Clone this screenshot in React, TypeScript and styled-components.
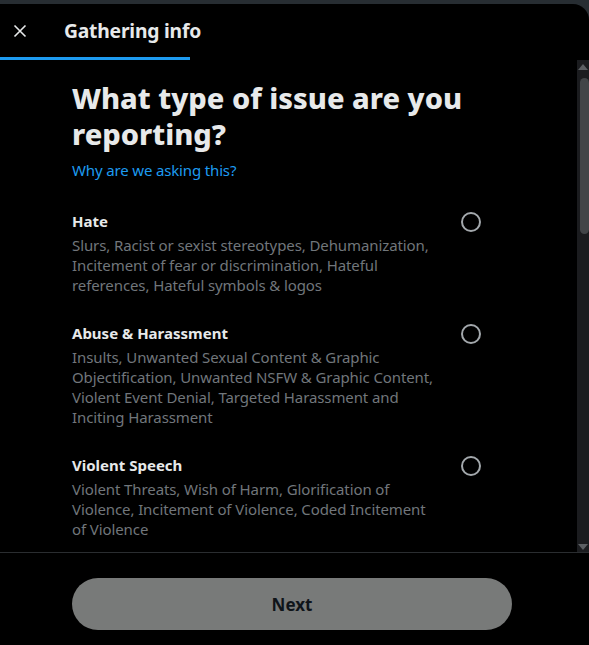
import React from "react";
import styled, { createGlobalStyle } from "styled-components";

const Global = createGlobalStyle`
  html, body { margin: 0; padding: 0; background: #272d32; }
  body { font-family: "Noto Sans", "Open Sans", sans-serif; }
  * { box-sizing: border-box; }
`;

const Page = styled.div`
  width: 589px;
  height: 645px;
  padding-top: 4px;
  background: #272d32;
  overflow: hidden;
`;

const Modal = styled.div`
  height: 641px;
  background: #000;
  border-top-right-radius: 16px;
  display: flex;
  flex-direction: column;
  overflow: hidden;
`;

const Header = styled.div`
  height: 53px;
  display: flex;
  align-items: center;
  padding-left: 10px;
  gap: 34px;
`;

const CloseButton = styled.button`
  width: 20px;
  height: 20px;
  padding: 0;
  border: none;
  background: transparent;
  display: flex;
  align-items: center;
  justify-content: center;
  color: #e7e9ea;
`;

const Title = styled.h2`
  margin: 0;
  font-size: 19.3px;
  font-weight: 700;
  color: #e7e9ea;
  letter-spacing: -0.2px;
`;

const Progress = styled.div`
  height: 3px;
  width: 100%;
`;

const ProgressFill = styled.div`
  height: 3px;
  background: #1d9bf0;
`;

const Body = styled.div`
  flex: 0 0 492px;
  display: flex;
  overflow: hidden;
`;

const Scroller = styled.div`
  flex: 1;
  overflow: hidden;
  padding: 20px 96px 0 72px;
`;

const Heading = styled.h1`
  margin: 0;
  font-size: 29px;
  line-height: 36px;
  font-weight: 800;
  color: #e7e9ea;
`;

const Link = styled.a`
  display: block;
  margin-top: 8px;
  font-size: 15px;
  line-height: 20px;
  color: #1d9bf0;
  text-decoration: none;
  letter-spacing: -0.15px;
`;

const List = styled.div`
  margin-top: 17px;
  display: flex;
  flex-direction: column;
`;

const Option = styled.label`
  display: flex;
  align-items: flex-start;
  justify-content: space-between;
  gap: 24px;
  padding: 14px 0;
`;

const OptionText = styled.div`
  flex: 1;
`;

const OptionTitle = styled.div`
  font-size: 15px;
  line-height: 20px;
  font-weight: 700;
  color: #e7e9ea;
`;

const OptionDesc = styled.div`
  font-size: 15px;
  line-height: 20px;
  color: #71767b;
  margin-top: 4px;
  letter-spacing: -0.1px;
`;

const Radio = styled.span`
  flex: 0 0 20px;
  width: 20px;
  height: 20px;
  border-radius: 50%;
  border: 2px solid #a3a8ac;
  margin-top: 1px;
`;

const ScrollTrack = styled.div`
  flex: 0 0 12px;
  background: #1b1c1f;
  display: flex;
  flex-direction: column;
  align-items: center;
  padding: 4px 0 2px;
`;

const Arrow = styled.div<{ $down?: boolean }>`
  width: 0;
  height: 0;
  border-left: 5px solid transparent;
  border-right: 5px solid transparent;
  ${(p) =>
    p.$down
      ? "border-top: 6px solid #5c5f63; margin-top: auto;"
      : "border-bottom: 6px solid #5c5f63;"}
`;

const Thumb = styled.div`
  margin-top: 8px;
  width: 9px;
  margin-left: 3px;
  height: 156px;
  border-radius: 5px;
  background: #424548;
`;

const Footer = styled.div`
  flex: 1;
  border-top: 1px solid #2a2d30;
  padding: 25px 77px 0 72px;
`;

const NextButton = styled.button`
  width: 440px;
  height: 52px;
  border-radius: 26px;
  border: none;
  background: #787a79;
  color: #0f1419;
  font-family: inherit;
  font-size: 17px;
  font-weight: 700;
`;

const options = [
  {
    title: "Hate",
    desc: "Slurs, Racist or sexist stereotypes, Dehumanization, Incitement of fear or discrimination, Hateful references, Hateful symbols & logos",
  },
  {
    title: "Abuse & Harassment",
    desc: "Insults, Unwanted Sexual Content & Graphic Objectification, Unwanted NSFW & Graphic Content, Violent Event Denial, Targeted Harassment and Inciting Harassment",
  },
  {
    title: "Violent Speech",
    desc: "Violent Threats, Wish of Harm, Glorification of Violence, Incitement of Violence, Coded Incitement of Violence",
  },
];

export default function App() {
  return (
    <Page>
      <Global />
      <Modal>
        <Header>
          <CloseButton aria-label="Close">
            <svg width="16" height="16" viewBox="0 0 16 16">
              <path d="M2.5 2.5 L13.5 13.5 M13.5 2.5 L2.5 13.5" stroke="#e7e9ea" strokeWidth="1.6" />
            </svg>
          </CloseButton>
          <Title>Gathering info</Title>
        </Header>
        <Progress>
          <ProgressFill style={{ width: "190px" }} />
        </Progress>
        <Body>
          <Scroller>
            <Heading>What type of issue are you reporting?</Heading>
            <Link href="#">Why are we asking this?</Link>
            <List>
              {options.map((o) => (
                <Option key={o.title}>
                  <OptionText>
                    <OptionTitle>{o.title}</OptionTitle>
                    <OptionDesc>{o.desc}</OptionDesc>
                  </OptionText>
                  <Radio />
                </Option>
              ))}
            </List>
          </Scroller>
          <ScrollTrack>
            <Arrow />
            <Thumb />
            <Arrow $down />
          </ScrollTrack>
        </Body>
        <Footer>
          <NextButton>Next</NextButton>
        </Footer>
      </Modal>
    </Page>
  );
}
